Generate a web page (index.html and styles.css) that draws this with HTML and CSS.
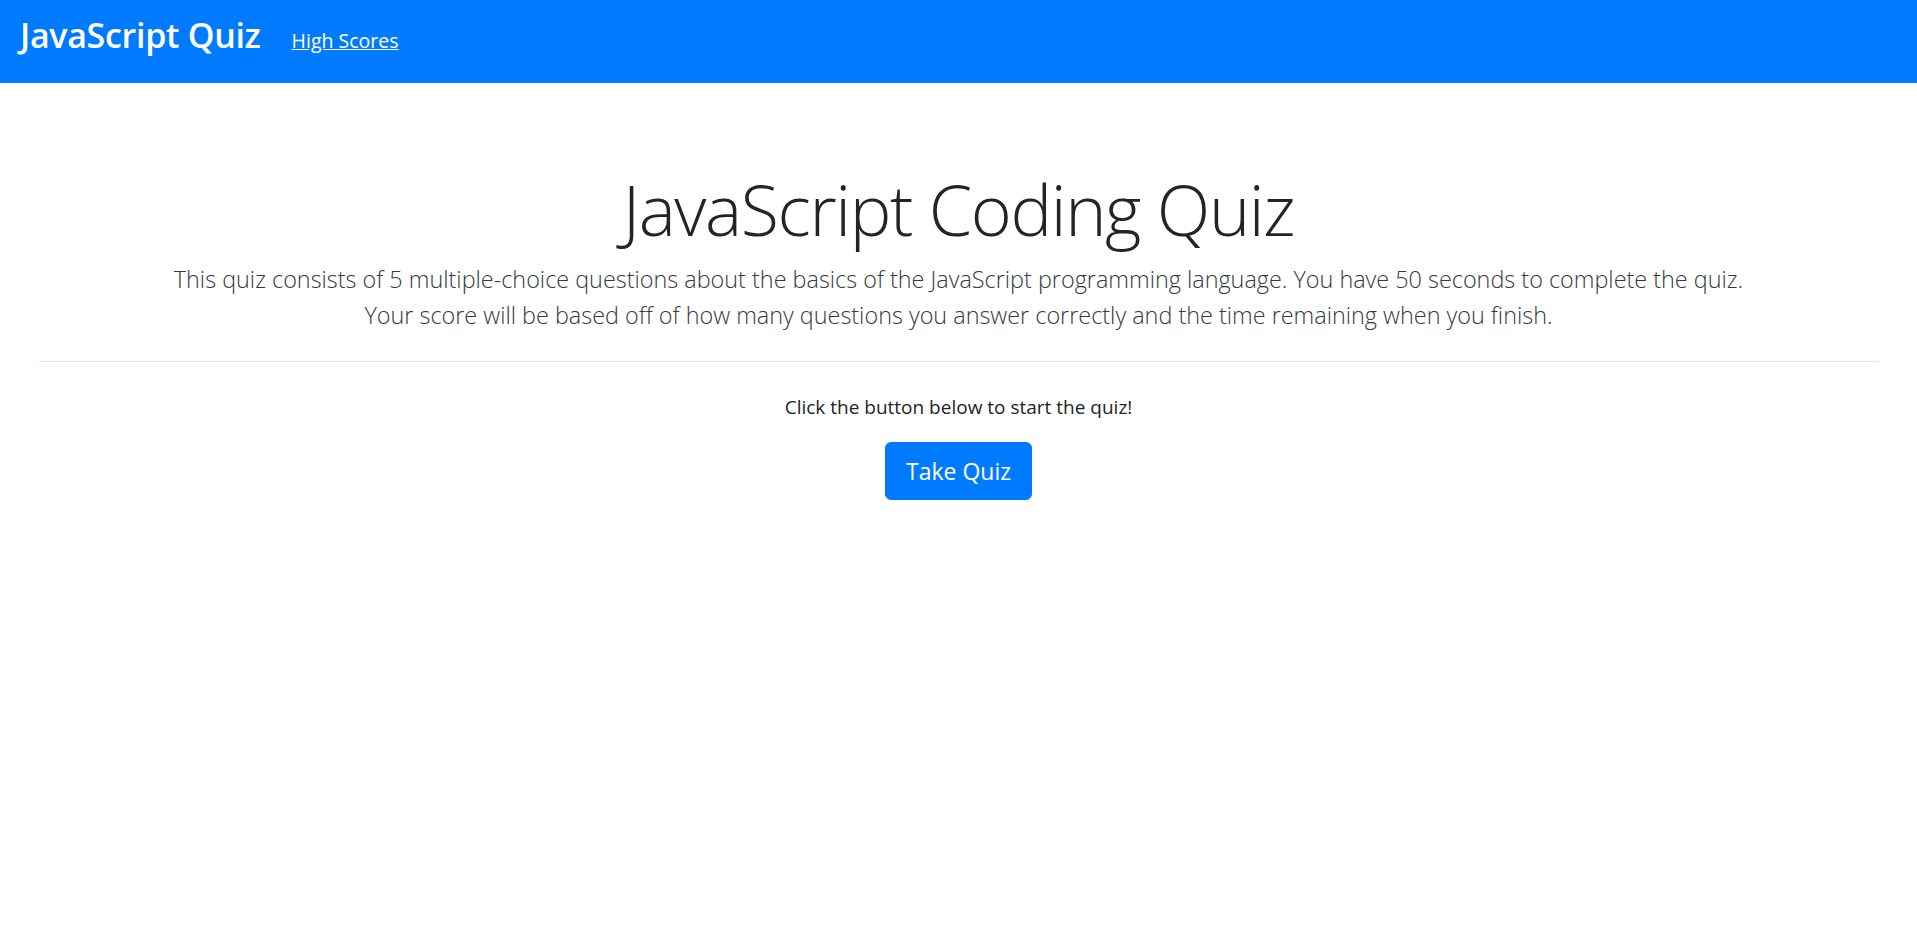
FILE: index.html
```html
<!DOCTYPE html>
<html lang="en">
<head>
<meta charset="utf-8">
<title>JavaScript Quiz</title>
<link rel="stylesheet" href="styles.css">
</head>
<body>
<nav class="navbar">
  <a class="brand" href="#">JavaScript Quiz</a>
  <a class="nav-link" href="#">High Scores</a>
</nav>
<main class="jumbotron">
  <h1 class="display">JavaScript Coding Quiz</h1>
  <p class="lead">This quiz consists of 5 multiple-choice questions about the basics of the JavaScript programming language. You have 50 seconds to complete the quiz.<br>Your score will be based off of how many questions you answer correctly and the time remaining when you finish.</p>
  <hr class="divider">
  <p class="intro">Click the button below to start the quiz!</p>
  <button class="btn-primary" type="button">Take Quiz</button>
</main>
</body>
</html>
```
FILE: styles.css
```css
* { box-sizing: border-box; }
html, body { margin: 0; background: #fff; }
body {
  font-family: "Open Sans", "Noto Sans", sans-serif;
  font-size: 20px;
  color: #212529;
}
.navbar {
  display: flex;
  align-items: center;
  height: 83px;
  padding: 0 20px 14px;
  background: #007bff;
}
.brand {
  color: #fff;
  font-size: 34px;
  font-weight: 600;
  text-decoration: none;
  letter-spacing: -0.3px;
  margin-right: 31px;
}
.nav-link {
  color: #fff;
  font-size: 19.5px;
  text-decoration: underline;
  margin-top: 11px;
}
.jumbotron {
  text-align: center;
  padding: 84px 39px 0;
}
.display {
  margin: 0;
  font-size: 70px;
  font-weight: 300;
  line-height: 84px;
  letter-spacing: -1.4px;
}
.lead {
  margin: 10px 0 0;
  font-size: 23.4px;
  font-weight: 300;
  line-height: 36px;
  color: #343a40;
}
.divider {
  margin: 28px 0 30px;
  border: 0;
  border-top: 1px solid rgba(0,0,0,.1);
}
.intro {
  margin: 0 0 20px;
  font-size: 19px;
  line-height: 30px;
}
.btn-primary {
  font-family: inherit;
  font-size: 23px;
  line-height: 36px;
  padding: 10px 20px;
  color: #fff;
  background: #007bff;
  border: 1px solid #007bff;
  border-radius: 6px;
}
```
